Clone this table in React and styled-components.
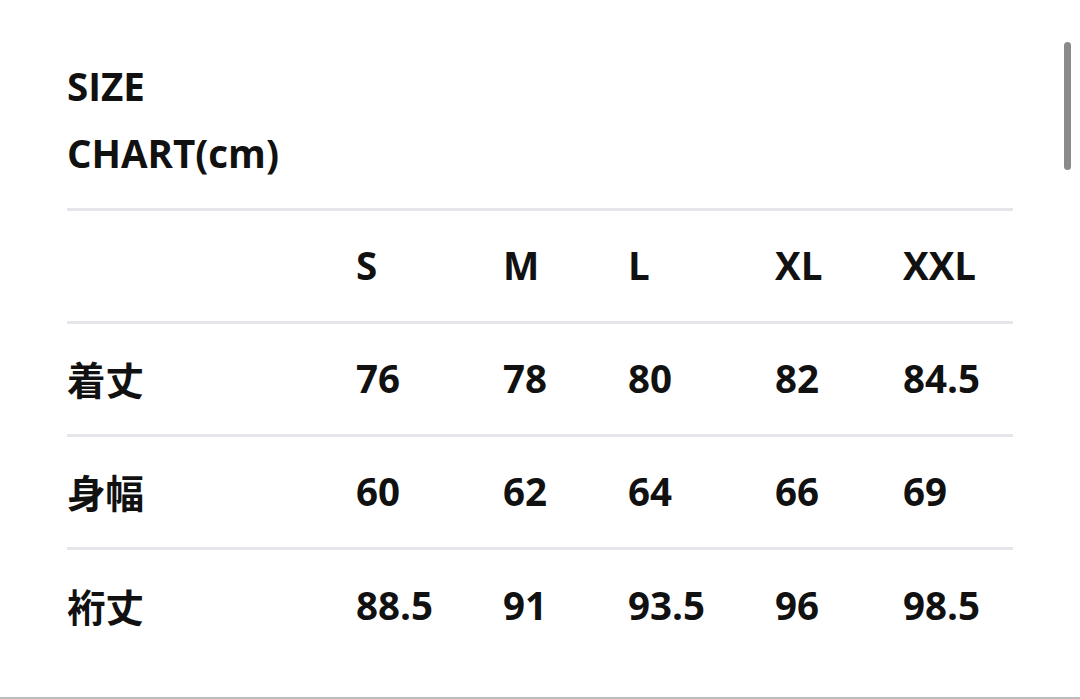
import React from 'react';
import styled, { createGlobalStyle } from 'styled-components';

const sizes = ['S', 'M', 'L', 'XL', 'XXL'];
const widths = [289, 147, 125, 147, 128, 110];

const rows = [
  { label: '着丈', values: ['76', '78', '80', '82', '84.5'] },
  { label: '身幅', values: ['60', '62', '64', '66', '69'] },
  { label: '裄丈', values: ['88.5', '91', '93.5', '96', '98.5'] },
];

function App() {
  return (
    <>
      <GlobalStyle />
      <Page>
        <Title>
          SIZE
          <br />
          CHART(cm)
        </Title>
        <Table>
          <colgroup>
            {widths.map((w, i) => (
              <Col key={i} $w={w} />
            ))}
          </colgroup>
          <tbody>
            <Row>
              <Cell />
              {sizes.map((s) => (
                <Cell key={s}>{s}</Cell>
              ))}
            </Row>
            {rows.map((r) => (
              <Row key={r.label}>
                <Cell>{r.label}</Cell>
                {r.values.map((v, i) => (
                  <Cell key={i}>{v}</Cell>
                ))}
              </Row>
            ))}
          </tbody>
        </Table>
        <Scrollbar />
      </Page>
    </>
  );
}

export default App;

const GlobalStyle = createGlobalStyle`
  html, body {
    margin: 0;
    padding: 0;
    background: #fff;
  }
  body {
    font-family: "Open Sans", "Noto Sans CJK JP", sans-serif;
    color: #111;
  }
`;

const Page = styled.div`
  position: relative;
  box-sizing: border-box;
  height: 699px;
  padding: 53px 0 0 67px;
  border-bottom: 2px solid #bdbdbd;
  overflow: hidden;
`;

const Title = styled.h2`
  margin: 0 0 21px;
  font-size: 38.5px;
  line-height: 67px;
  font-weight: 700;
`;

const Table = styled.table`
  width: 946px;
  table-layout: fixed;
  border-collapse: collapse;
`;

const Col = styled.col`
  width: ${(p) => p.$w}px;
`;

const Row = styled.tr`
  height: 113px;
  border-top: 3px solid #e6e6ea;
`;

const Cell = styled.td`
  padding: 0 0 2px;
  text-align: left;
  vertical-align: middle;
  font-size: 38.5px;
  font-weight: 700;
  white-space: nowrap;
`;

const Scrollbar = styled.div`
  position: absolute;
  top: 42px;
  right: 9px;
  width: 7px;
  height: 128px;
  border-radius: 4px;
  background: #8a8a8a;
`;
